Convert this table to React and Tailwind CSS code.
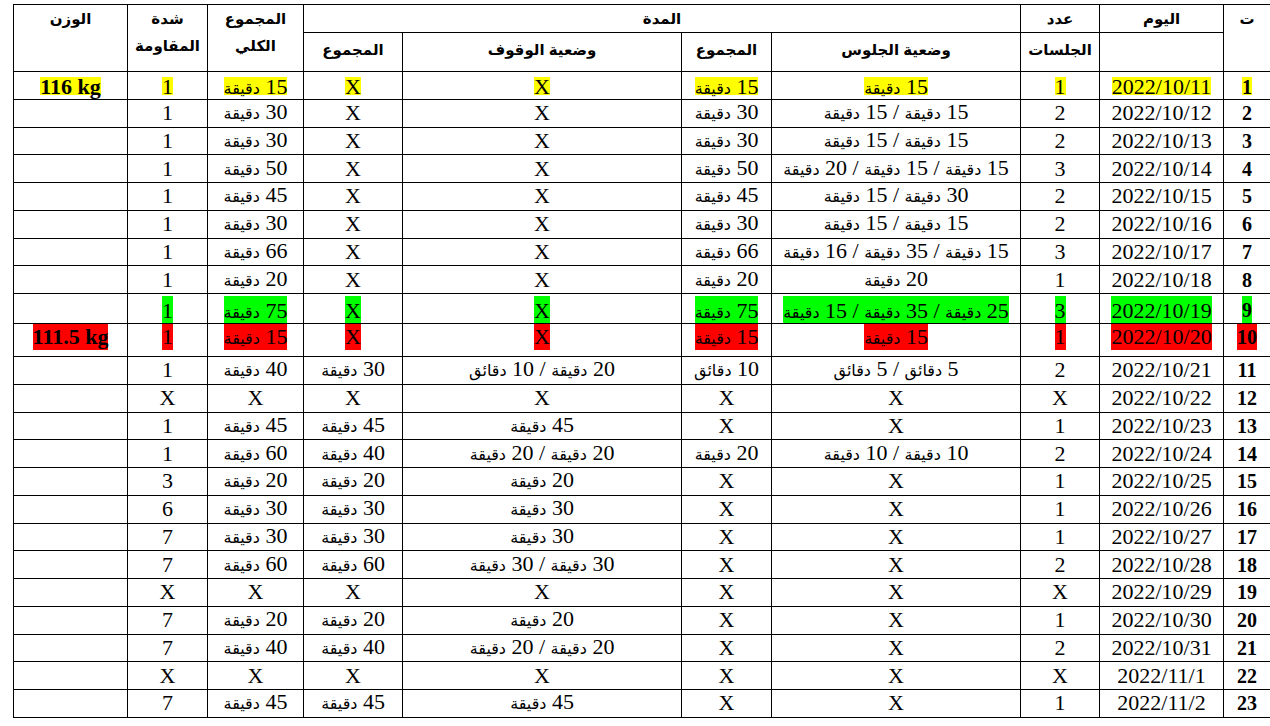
import { Fragment } from "react";

const serif = "font-['Liberation_Serif','DejaVu_Serif',serif]";
const sans = "font-['Liberation_Sans','DejaVu_Sans',sans-serif]";

const X = "X";

// columns, right to left: n, date, sessions, sit, sitSum, stand, standSum, total, resist, weight
const rows = [
  { n: 1, d: "2022/10/11", s: "1", sit: "15 دقيقة", sitSum: "15 دقيقة", st: X, stSum: X, tot: "15 دقيقة", r: "1", w: "116 kg", hl: "y" },
  { n: 2, d: "2022/10/12", s: "2", sit: "15 دقيقة / 15 دقيقة", sitSum: "30 دقيقة", st: X, stSum: X, tot: "30 دقيقة", r: "1" },
  { n: 3, d: "2022/10/13", s: "2", sit: "15 دقيقة / 15 دقيقة", sitSum: "30 دقيقة", st: X, stSum: X, tot: "30 دقيقة", r: "1" },
  { n: 4, d: "2022/10/14", s: "3", sit: "15 دقيقة / 15 دقيقة / 20 دقيقة", sitSum: "50 دقيقة", st: X, stSum: X, tot: "50 دقيقة", r: "1" },
  { n: 5, d: "2022/10/15", s: "2", sit: "30 دقيقة / 15 دقيقة", sitSum: "45 دقيقة", st: X, stSum: X, tot: "45 دقيقة", r: "1" },
  { n: 6, d: "2022/10/16", s: "2", sit: "15 دقيقة / 15 دقيقة", sitSum: "30 دقيقة", st: X, stSum: X, tot: "30 دقيقة", r: "1" },
  { n: 7, d: "2022/10/17", s: "3", sit: "15 دقيقة / 35 دقيقة / 16 دقيقة", sitSum: "66 دقيقة", st: X, stSum: X, tot: "66 دقيقة", r: "1" },
  { n: 8, d: "2022/10/18", s: "1", sit: "20 دقيقة", sitSum: "20 دقيقة", st: X, stSum: X, tot: "20 دقيقة", r: "1" },
  { n: 9, d: "2022/10/19", s: "3", sit: "25 دقيقة / 35 دقيقة / 15 دقيقة", sitSum: "75 دقيقة", st: X, stSum: X, tot: "75 دقيقة", r: "1", hl: "g" },
  { n: 10, d: "2022/10/20", s: "1", sit: "15 دقيقة", sitSum: "15 دقيقة", st: X, stSum: X, tot: "15 دقيقة", r: "1", w: "111.5 kg", hl: "r" },
  { n: 11, d: "2022/10/21", s: "2", sit: "5 دقائق / 5 دقائق", sitSum: "10 دقائق", st: "20 دقيقة / 10 دقائق", stSum: "30 دقيقة", tot: "40 دقيقة", r: "1" },
  { n: 12, d: "2022/10/22", s: X, sit: X, sitSum: X, st: X, stSum: X, tot: X, r: X },
  { n: 13, d: "2022/10/23", s: "1", sit: X, sitSum: X, st: "45 دقيقة", stSum: "45 دقيقة", tot: "45 دقيقة", r: "1" },
  { n: 14, d: "2022/10/24", s: "2", sit: "10 دقيقة / 10 دقيقة", sitSum: "20 دقيقة", st: "20 دقيقة / 20 دقيقة", stSum: "40 دقيقة", tot: "60 دقيقة", r: "1" },
  { n: 15, d: "2022/10/25", s: "1", sit: X, sitSum: X, st: "20 دقيقة", stSum: "20 دقيقة", tot: "20 دقيقة", r: "3" },
  { n: 16, d: "2022/10/26", s: "1", sit: X, sitSum: X, st: "30 دقيقة", stSum: "30 دقيقة", tot: "30 دقيقة", r: "6" },
  { n: 17, d: "2022/10/27", s: "1", sit: X, sitSum: X, st: "30 دقيقة", stSum: "30 دقيقة", tot: "30 دقيقة", r: "7" },
  { n: 18, d: "2022/10/28", s: "2", sit: X, sitSum: X, st: "30 دقيقة / 30 دقيقة", stSum: "60 دقيقة", tot: "60 دقيقة", r: "7" },
  { n: 19, d: "2022/10/29", s: X, sit: X, sitSum: X, st: X, stSum: X, tot: X, r: X },
  { n: 20, d: "2022/10/30", s: "1", sit: X, sitSum: X, st: "20 دقيقة", stSum: "20 دقيقة", tot: "20 دقيقة", r: "7" },
  { n: 21, d: "2022/10/31", s: "2", sit: X, sitSum: X, st: "20 دقيقة / 20 دقيقة", stSum: "40 دقيقة", tot: "40 دقيقة", r: "7" },
  { n: 22, d: "2022/11/1", s: X, sit: X, sitSum: X, st: X, stSum: X, tot: X, r: X },
  { n: 23, d: "2022/11/2", s: "1", sit: X, sitSum: X, st: "45 دقيقة", stSum: "45 دقيقة", tot: "45 دقيقة", r: "7" },
];

const hlClass = {
  y: "bg-[#ffff00] inline-block h-[18px] leading-[20px] align-[-2px]",
  g: "bg-[#00ff00] inline-block h-[27px] leading-[29px] align-[-5px]",
  r: "bg-[#ff0000] inline-block h-[26px] leading-[26px]",
};

// number in the serif face, the Arabic unit word a bit smaller
function Part({ p }) {
  const m = p.match(/^(\S+) (.+)$/);
  if (!m) return <span>{p}</span>;
  return (
    <span>
      {m[1]}
      {" "}
      <span className="font-['DejaVu_Sans',sans-serif] text-[16px]">{m[2]}</span>
    </span>
  );
}

function Val({ v, hl, latin }) {
  if (!v) return null;
  let inner;
  if (latin) {
    inner = <span dir="ltr">{v}</span>;
  } else {
    const parts = v.split(" / ");
    inner = (
      <span>
        {parts.map((p, i) => (
          <Fragment key={i}>
            {i > 0 && " / "}
            <Part p={p} />
          </Fragment>
        ))}
      </span>
    );
  }
  if (!hl) return inner;
  return <span className={hlClass[hl]}>{inner}</span>;
}

const td = "border border-black p-0 text-center whitespace-nowrap leading-[22px] overflow-hidden";
const th = "border border-black p-0 text-center align-top whitespace-nowrap font-bold text-[15px] leading-[27px]";

export default function App() {
  return (
    <div className="bg-white min-h-[726px] pl-[13px] pt-[4px] text-black">
      <table
        dir="rtl"
        className={`table-fixed border-collapse w-[1257px] ${serif} text-[22px]`}
      >
        <colgroup>
          <col className="w-[47px]" />
          <col className="w-[124px]" />
          <col className="w-[79px]" />
          <col className="w-[249px]" />
          <col className="w-[90px]" />
          <col className="w-[279px]" />
          <col className="w-[99px]" />
          <col className="w-[96px]" />
          <col className="w-[80px]" />
          <col className="w-[114px]" />
        </colgroup>
        <thead className={sans}>
          <tr className="h-[28px]">
            <th rowSpan={2} className={th}>ت</th>
            <th className={th}>اليوم</th>
            <th className={th}>عدد</th>
            <th colSpan={4} className={th}>المدة</th>
            <th rowSpan={2} className={th}>
              المجموع
              <br />
              الكلي
            </th>
            <th rowSpan={2} className={th}>
              شدة
              <br />
              المقاومة
            </th>
            <th rowSpan={2} className={th}>الوزن</th>
          </tr>
          <tr className="h-[39px]">
            <th className={th}></th>
            <th className={`${th} pt-[3px]`}>الجلسات</th>
            <th className={`${th} pt-[3px]`}>وضعية الجلوس</th>
            <th className={`${th} pt-[3px]`}>المجموع</th>
            <th className={`${th} pt-[3px]`}>وضعية الوقوف</th>
            <th className={`${th} pt-[3px]`}>المجموع</th>
          </tr>
        </thead>
        <tbody>
          {rows.map((r) => {
            const va = r.n === 10 ? "align-top" : "align-middle";
            return (
              <tr key={r.n} className={r.n === 10 ? "h-[33px]" : "h-[27.75px]"}>
                <td className={`${td} ${va} font-bold text-[20px]`}>
                  <Val v={String(r.n)} hl={r.hl} />
                </td>
                <td className={`${td} ${va}`}><Val v={r.d} hl={r.hl} /></td>
                <td className={`${td} ${va}`}><Val v={r.s} hl={r.hl} /></td>
                <td className={`${td} ${va}`}><Val v={r.sit} hl={r.hl} /></td>
                <td className={`${td} ${va}`}><Val v={r.sitSum} hl={r.hl} /></td>
                <td className={`${td} ${va}`}><Val v={r.st} hl={r.hl} /></td>
                <td className={`${td} ${va}`}><Val v={r.stSum} hl={r.hl} /></td>
                <td className={`${td} ${va}`}><Val v={r.tot} hl={r.hl} /></td>
                <td className={`${td} ${va}`}><Val v={r.r} hl={r.hl} /></td>
                <td className={`${td} ${va} font-bold`}><Val v={r.w} hl={r.hl} latin /></td>
              </tr>
            );
          })}
        </tbody>
      </table>
    </div>
  );
}
